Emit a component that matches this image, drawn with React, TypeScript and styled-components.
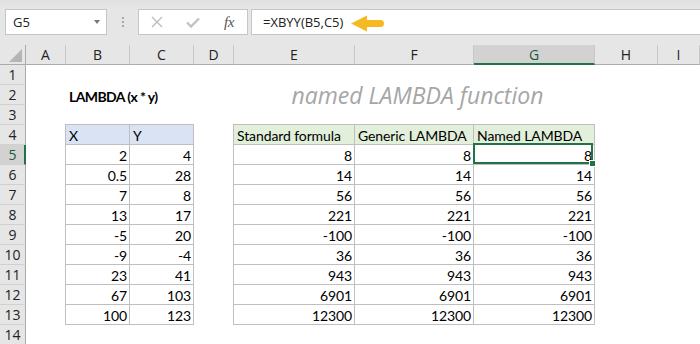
import React from 'react';
import styled, { createGlobalStyle, css } from 'styled-components';

const GREEN = '#217346';
const LINE = '#bfbfbf';
const HEAD_BG = '#e6e6e6';

const Global = createGlobalStyle`
  html, body { margin: 0; padding: 0; background: #fff; }
  body { width: 700px; height: 344px; overflow: hidden; }
`;

const Page = styled.div`
  width: 700px;
  height: 344px;
  display: flex;
  flex-direction: column;
  overflow: hidden;
  background: #fff;
`;

/* ---------- formula bar ---------- */
const TopBar = styled.div`
  flex: none;
  height: 45px;
  box-sizing: border-box;
  padding: 9px 0 0 5px;
  display: flex;
  align-items: flex-start;
  background: linear-gradient(#e0e0e0, ${HEAD_BG} 9px);
`;

const Field = styled.div`
  height: 26px;
  box-sizing: border-box;
  background: #fff;
  border: 1px solid #c6c6c6;
  display: flex;
  align-items: center;
  font-family: 'Open Sans', 'Liberation Sans', sans-serif;
  font-size: 13px;
  color: #222;
`;

const NameBox = styled(Field)`
  width: 102px;
  padding: 0 6px 0 7px;
  justify-content: space-between;
`;

const Caret = styled.span`
  width: 0;
  height: 0;
  border-left: 3.5px solid transparent;
  border-right: 3.5px solid transparent;
  border-top: 4px solid #777;
`;

const Grip = styled.div`
  width: 31px;
  height: 26px;
  display: flex;
  flex-direction: column;
  align-items: center;
  justify-content: center;
  gap: 2px;
`;

const GripDot = styled.span`
  width: 2px;
  height: 2px;
  background: #a8a8a8;
`;

const FnBox = styled(Field)`
  width: 110px;
  display: grid;
  grid-template-columns: repeat(3, 36px);
  justify-items: center;
  align-items: center;
`;

const Fx = styled.span`
  font-family: 'Liberation Serif', serif;
  font-style: italic;
  font-size: 15px;
  color: #555;
  letter-spacing: -0.5px;
`;

const FormulaInput = styled(Field)`
  flex: 1;
  margin-left: 3px;
  border-right: none;
  padding-left: 11px;
  white-space: nowrap;
`;

const Arrow = styled.svg`
  margin-left: 8px;
  margin-top: 2px;
  flex: none;
`;

/* ---------- sheet grid ---------- */
const Sheet = styled.div`
  flex: 1;
  display: grid;
  grid-template-columns: 26px 40px 64px 64px 40px 121px 119px 121px 63px 1fr;
  grid-auto-rows: 20px;
  background: #fff;
`;

const Corner = styled.div`
  box-sizing: border-box;
  background: ${HEAD_BG};
  border-right: 1px solid #ababab;
  border-bottom: 1px solid #ababab;
  display: flex;
  align-items: flex-end;
  justify-content: flex-end;
  padding: 0 3px 2px 0;
`;

const ColHeader = styled.div<{ $active?: boolean }>`
  box-sizing: border-box;
  display: flex;
  align-items: center;
  justify-content: center;
  font-family: 'Open Sans', 'Liberation Sans', sans-serif;
  font-size: 14px;
  color: ${p => (p.$active ? '#1d5b39' : '#222')};
  background: ${p => (p.$active ? '#d2d2d2' : HEAD_BG)};
  border-right: 1px solid #c8c8c8;
  border-bottom: ${p => (p.$active ? `2px solid ${GREEN}` : '1px solid #ababab')};
`;

const RowHeader = styled.div<{ $active?: boolean }>`
  box-sizing: border-box;
  display: flex;
  align-items: center;
  justify-content: center;
  font-family: 'Open Sans', 'Liberation Sans', sans-serif;
  font-size: 14px;
  color: ${p => (p.$active ? '#1d5b39' : '#222')};
  background: ${p => (p.$active ? '#d2d2d2' : HEAD_BG)};
  border-bottom: 1px solid #d0d0d0;
  border-right: ${p => (p.$active ? `2px solid ${GREEN}` : '1px solid #ababab')};
  padding-left: ${p => (p.$active ? '1px' : '0')};
`;

type CellProps = {
  $fill?: string;
  $right?: boolean;
  $bold?: boolean;
  $table?: boolean;
  $edgeLeft?: boolean;
  $edgeTop?: boolean;
};

const edgeShadow = (l?: boolean, t?: boolean) => {
  const parts: string[] = [];
  if (l) parts.push(`-1px 0 0 ${LINE}`);
  if (t) parts.push(`0 -1px 0 ${LINE}`);
  if (l && t) parts.push(`-1px -1px 0 ${LINE}`);
  return parts.length ? parts.join(', ') : 'none';
};

const Cell = styled.div<CellProps>`
  position: relative;
  box-sizing: border-box;
  display: flex;
  align-items: flex-end;
  justify-content: ${p => (p.$right ? 'flex-end' : 'flex-start')};
  padding: 0 2px 0 3px;
  font-family: Lato, 'Liberation Sans', sans-serif;
  font-size: 14px;
  line-height: 17px;
  font-weight: ${p => (p.$bold ? 700 : 400)};
  letter-spacing: ${p => (p.$bold ? '-0.6px' : '-0.1px')};
  color: #000;
  white-space: nowrap;
  background: ${p => p.$fill ?? 'transparent'};
  ${p =>
    p.$table &&
    css`
      border-right: 1px solid ${LINE};
      border-bottom: 1px solid ${LINE};
    `}
  box-shadow: ${p => edgeShadow(p.$edgeLeft, p.$edgeTop)};
`;

const Note = styled.div`
  grid-column: span 3;
  display: flex;
  align-items: flex-end;
  justify-content: center;
  padding-left: 6px;
  font-family: 'Open Sans', 'DejaVu Sans', sans-serif;
  font-style: italic;
  font-size: 23px;
  line-height: 24px;
  color: #a6a6a6;
  white-space: nowrap;
  margin-bottom: -2px;
`;

const Selection = styled.div`
  position: absolute;
  top: -2px;
  left: -1px;
  right: 1px;
  bottom: 0;
  border: 2px solid ${GREEN};
  z-index: 2;
  pointer-events: none;
`;

const FillHandle = styled.span`
  position: absolute;
  right: -5px;
  bottom: -5px;
  width: 5px;
  height: 5px;
  background: ${GREEN};
  border: 1px solid #fff;
`;

const COLS = ['A', 'B', 'C', 'D', 'E', 'F', 'G', 'H', 'I'];
const XS = [2, 0.5, 7, 13, -5, -9, 23, 67, 100];
const YS = [4, 28, 8, 17, 20, -4, 41, 103, 123];
const PRODUCTS = XS.map((x, i) => x * YS[i]);

const BLUE = '#dae3f3';
const LIGHT_GREEN = '#e2efda';

function renderRow(r: number) {
  const cells: React.ReactNode[] = [];
  const key = (c: string) => `${c}${r}`;

  if (r === 2) {
    cells.push(<Cell key={key('A')} />);
    cells.push(
      <Cell key={key('B')} $bold>
        LAMBDA (x * y)
      </Cell>
    );
    cells.push(<Cell key={key('C')} />);
    cells.push(<Cell key={key('D')} />);
    cells.push(<Note key={key('E')}>named LAMBDA function</Note>);
    cells.push(<Cell key={key('H')} />);
    cells.push(<Cell key={key('I')} />);
    return cells;
  }

  const inTable = r >= 4 && r <= 13;
  const isHead = r === 4;
  const i = r - 5;

  COLS.forEach(c => {
    if (inTable && (c === 'B' || c === 'C')) {
      const text = isHead ? (c === 'B' ? 'X' : 'Y') : String(c === 'B' ? XS[i] : YS[i]);
      cells.push(
        <Cell
          key={key(c)}
          $table
          $edgeLeft={c === 'B'}
          $edgeTop={isHead}
          $fill={isHead ? BLUE : undefined}
          $right={!isHead}
        >
          {text}
        </Cell>
      );
    } else if (inTable && (c === 'E' || c === 'F' || c === 'G')) {
      const heads: Record<string, string> = {
        E: 'Standard formula',
        F: 'Generic LAMBDA',
        G: 'Named LAMBDA',
      };
      const text = isHead ? heads[c] : String(PRODUCTS[i]);
      const selected = c === 'G' && r === 5;
      cells.push(
        <Cell
          key={key(c)}
          $table
          $edgeLeft={c === 'E'}
          $edgeTop={isHead}
          $fill={isHead ? LIGHT_GREEN : undefined}
          $right={!isHead}
        >
          {text}
          {selected && (
            <Selection>
              <FillHandle />
            </Selection>
          )}
        </Cell>
      );
    } else {
      cells.push(<Cell key={key(c)} />);
    }
  });
  return cells;
}

export default function App() {
  const rows = Array.from({ length: 14 }, (_, k) => k + 1);
  return (
    <>
      <Global />
      <Page>
        <TopBar>
          <NameBox>
            <span>G5</span>
            <Caret />
          </NameBox>
          <Grip>
            <GripDot />
            <GripDot />
            <GripDot />
          </Grip>
          <FnBox>
            <svg width="12" height="12" viewBox="0 0 12 12">
              <path d="M1 1 L11 11 M11 1 L1 11" stroke="#bdbdbd" strokeWidth="1.4" fill="none" />
            </svg>
            <svg width="14" height="11" viewBox="0 0 14 11">
              <path d="M1 5.5 L5 9.5 L13 1.5" stroke="#c2c2c2" strokeWidth="2.4" fill="none" />
            </svg>
            <Fx>fx</Fx>
          </FnBox>
          <FormulaInput>
            <span>=XBYY(B5,C5)</span>
            <Arrow width="34" height="17" viewBox="0 0 34 17">
              <path
                d="M0 8.5 L16 0.5 V5 H29.5 A3.5 3.5 0 0 1 29.5 12 H16 V16.5 Z"
                fill="#f5b922"
              />
            </Arrow>
          </FormulaInput>
        </TopBar>
        <Sheet>
          <Corner>
            <svg width="13" height="13" viewBox="0 0 13 13">
              <polygon points="13,0 13,13 0,13" fill="#b5b5b5" />
            </svg>
          </Corner>
          {COLS.map(c => (
            <ColHeader key={c} $active={c === 'G'}>
              {c}
            </ColHeader>
          ))}
          {rows.map(r => (
            <React.Fragment key={r}>
              <RowHeader $active={r === 5}>{r}</RowHeader>
              {renderRow(r)}
            </React.Fragment>
          ))}
        </Sheet>
      </Page>
    </>
  );
}
